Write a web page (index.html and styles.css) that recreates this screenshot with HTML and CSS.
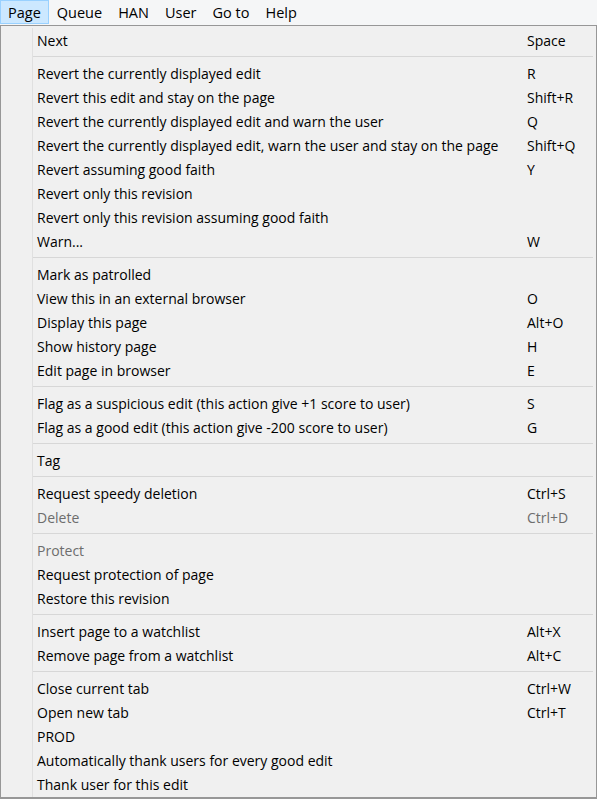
FILE: index.html
```html
<!DOCTYPE html>
<html>
<head>
<meta charset="utf-8">
<link rel="stylesheet" href="styles.css">
</head>
<body>
<div class="menubar">
  <span class="mb-item active">Page</span>
  <span class="mb-item">Queue</span>
  <span class="mb-item">HAN</span>
  <span class="mb-item">User</span>
  <span class="mb-item">Go to</span>
  <span class="mb-item">Help</span>
</div>
<div class="menu">
  <div class="list">
    <div class="item"><span>Next</span><span class="key">Space</span></div>
    <div class="sep"></div>
    <div class="item"><span>Revert the currently displayed edit</span><span class="key">R</span></div>
    <div class="item"><span>Revert this edit and stay on the page</span><span class="key">Shift+R</span></div>
    <div class="item"><span>Revert the currently displayed edit and warn the user</span><span class="key">Q</span></div>
    <div class="item"><span>Revert the currently displayed edit, warn the user and stay on the page</span><span class="key">Shift+Q</span></div>
    <div class="item"><span>Revert assuming good faith</span><span class="key">Y</span></div>
    <div class="item"><span>Revert only this revision</span><span class="key"></span></div>
    <div class="item"><span>Revert only this revision assuming good faith</span><span class="key"></span></div>
    <div class="item"><span>Warn...</span><span class="key">W</span></div>
    <div class="sep"></div>
    <div class="item"><span>Mark as patrolled</span><span class="key"></span></div>
    <div class="item"><span>View this in an external browser</span><span class="key">O</span></div>
    <div class="item"><span>Display this page</span><span class="key">Alt+O</span></div>
    <div class="item"><span>Show history page</span><span class="key">H</span></div>
    <div class="item"><span>Edit page in browser</span><span class="key">E</span></div>
    <div class="sep"></div>
    <div class="item"><span>Flag as a suspicious edit (this action give +1 score to user)</span><span class="key">S</span></div>
    <div class="item"><span>Flag as a good edit (this action give -200 score to user)</span><span class="key">G</span></div>
    <div class="sep"></div>
    <div class="item"><span>Tag</span><span class="key"></span></div>
    <div class="sep"></div>
    <div class="item"><span>Request speedy deletion</span><span class="key">Ctrl+S</span></div>
    <div class="item disabled"><span>Delete</span><span class="key">Ctrl+D</span></div>
    <div class="sep"></div>
    <div class="item disabled"><span>Protect</span><span class="key"></span></div>
    <div class="item"><span>Request protection of page</span><span class="key"></span></div>
    <div class="item"><span>Restore this revision</span><span class="key"></span></div>
    <div class="sep"></div>
    <div class="item"><span>Insert page to a watchlist</span><span class="key">Alt+X</span></div>
    <div class="item"><span>Remove page from a watchlist</span><span class="key">Alt+C</span></div>
    <div class="sep"></div>
    <div class="item"><span>Close current tab</span><span class="key">Ctrl+W</span></div>
    <div class="item"><span>Open new tab</span><span class="key">Ctrl+T</span></div>
    <div class="item"><span>PROD</span><span class="key"></span></div>
    <div class="item"><span>Automatically thank users for every good edit</span><span class="key"></span></div>
    <div class="item"><span>Thank user for this edit</span><span class="key"></span></div>
  </div>
</div>
</body>
</html>
```

FILE: styles.css
```css
* { box-sizing: border-box; }
html, body { margin: 0; padding: 0; }
body {
  width: 597px;
  height: 799px;
  background: #f0f0f0;
  font-family: "Open Sans", "Noto Sans", sans-serif;
  font-size: 14px;
  color: #000;
  overflow: hidden;
}
.menubar {
  height: 25px;
  background: #f5f6f7;
  display: flex;
  align-items: stretch;
}
.mb-item {
  display: flex;
  align-items: center;
  padding: 0 7px;
  height: 24px;
  font-size: 14.5px;
  border: 1px solid transparent;
}
.mb-item.active {
  background: #cce8ff;
  border-color: #99d1ff;
}
.menu {
  width: 597px;
  height: 774px;
  border: 1px solid #979797;
  border-bottom-width: 2px;
  background: #f0f0f0;
  padding: 2px 3px 0 0;
  display: flex;
}
.list {
  margin-left: 31px;
  flex: 1;
  border-left: 1px solid #e0e0e0;
  padding-bottom: 3px;
}
.item {
  height: 24px;
  display: grid;
  grid-template-columns: 1fr 66px;
  align-items: center;
  padding-left: 4px;
  white-space: nowrap;
}
.item.disabled { color: #6d6d6d; }
.sep {
  height: 1px;
  background: #d7d7d7;
  margin: 4px 0;
}
```
